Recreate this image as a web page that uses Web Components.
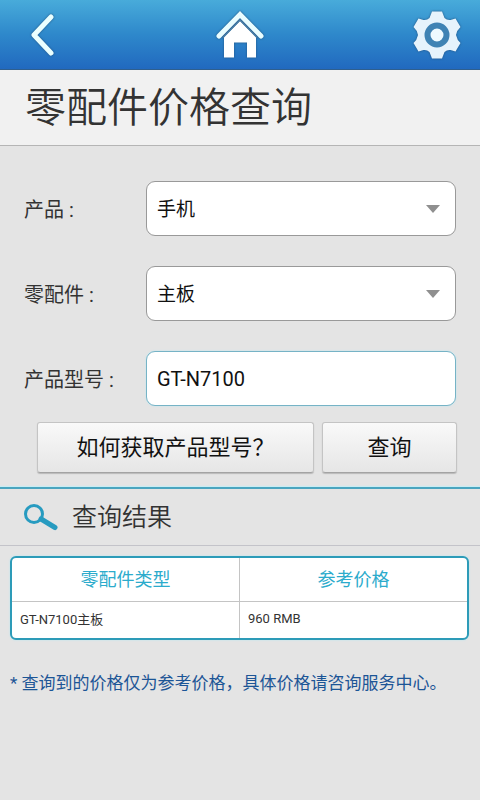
<!DOCTYPE html>
<html lang="zh-CN">
<head>
<meta charset="utf-8">
<meta name="viewport" content="width=device-width, initial-scale=1">
<title>零配件价格查询</title>
<style>
  html { min-height: 100%; background: #e4e4e4; }
  body { margin: 0; font-family: Roboto, "Noto Sans CJK SC", sans-serif; color: #333; }
</style>
</head>
<body>
<price-page></price-page>
<script>
function define(name, html) {
  const template = document.createElement('template');
  template.innerHTML = html;
  customElements.define(name, class extends HTMLElement {
    constructor() {
      super();
      this.attachShadow({ mode: 'open' }).append(template.content.cloneNode(true));
    }
  });
}

define('app-bar', `
  <style>
    :host { display: grid; grid-template-columns: 1fr auto 1fr; align-items: center; height: 70px; box-sizing: border-box;
      padding: 0 16px; background: linear-gradient(#48abda, #2e88cb 50%, #2169bf); border-bottom: 1px solid #2f5f8e; }
    button { display: block; padding: 0; border: 0; background: none; cursor: pointer; }
    button:last-child { justify-self: end; }
    svg { display: block; filter: drop-shadow(0 0 1px #22527f); }
  </style>
  <button aria-label="返回"><svg width="54" height="54" viewBox="0 0 54 54" fill="none" stroke="#eaffff" stroke-width="5" stroke-linecap="round" stroke-linejoin="round"><path d="M35 9 18 27 35 45"/></svg></button>
  <button aria-label="主页"><svg width="50" height="54" viewBox="0 0 50 54"><path d="M4 28 25 6.500 46 28" fill="none" stroke="#e9fdff" stroke-width="5" stroke-linecap="round" stroke-linejoin="miter"/><path d="M9 29 25 13 41 29V49.500H32V34.500H19V49.500H9Z" fill="#fff"/><path d="M8 29.500 25 12 42 29.500" fill="none" stroke="#4a7fa8" stroke-width="1.500"/></svg></button>
  <button aria-label="设置"><svg width="54" height="54" viewBox="-27 -27 54 54"><path d="M-5-23.500H5L7.500-17Q10-14.500 13.500-15L18.500-16.500L23.500-8Q20-5 19 0Q20 5 23.500 8L18.500 16.500L13.500 15Q10 14.500 7.500 17L5 23.500H-5L-7.500 17Q-10 14.500-13.500 15L-18.500 16.500L-23.500 8Q-20 5-19 0Q-20-5-23.500-8L-18.500-16.500L-13.500-15Q-10-14.500-7.500-17Z" fill="#e6f3fc"/><circle r="9.500" fill="#eefaff" stroke="#3f83b4" stroke-width="6"/></svg></button>
`);

define('page-title', `
  <style>
    :host { display: block; background: #f1f1f1; border-bottom: 1px solid #b5b5b5; padding: 4px 25px 11px; }
    h1 { margin: 0; font-size: 41px; line-height: 60px; font-weight: 350; color: #333; font-family: "Noto Sans CJK SC", sans-serif; }
  </style>
  <h1><slot></slot></h1>
`);

const fieldStyle = `
  :host { display: grid; grid-template-columns: 122px 1fr; align-items: center; }
  label { padding-top: 2px; font-size: 20px; line-height: 28px; color: #333; }
  .box { display: grid; align-items: center; }
  .box > * { grid-area: 1 / 1; }
  select, input { appearance: none; box-sizing: border-box; width: 100%; min-width: 0; height: 55px; margin: 0;
    padding: 0 10px; border: 1px solid #999; border-radius: 9px; background: #fff; font: inherit; font-size: 19px; color: #111; outline: 0; }
  select { padding-top: 2px; }
  input { font-size: 20px; border-color: #76b3c6; box-shadow: 0 0 2px #b8e6f2; }
  svg { justify-self: end; margin-right: 15px; pointer-events: none; }
`;

function defineField(name, control) {
  customElements.define(name, class extends HTMLElement {
    constructor() {
      super();
      this.attachShadow({ mode: 'open' }).innerHTML =
        `<style>${fieldStyle}</style><label for="control"></label><div class="box">${control}</div>`;
    }
    connectedCallback() {
      this.shadowRoot.querySelector('label').textContent = this.getAttribute('label');
      const value = this.getAttribute('value');
      const el = this.shadowRoot.getElementById('control');
      if (el.tagName === 'SELECT') el.add(new Option(value, value));
      else el.value = value;
    }
  });
}
defineField('select-field', '<select id="control"></select><svg width="16" height="10" viewBox="0 0 16 10"><path d="M1 1H15L8 9Z" fill="#8f8f8f"/></svg>');
defineField('text-field', '<input id="control" type="text">');

define('push-button', `
  <style>
    :host { display: block; }
    button { display: block; width: 100%; height: 51px; padding: 0 0 6px; border: 1px solid #c4c4c4; border-bottom-color: #a3a3a3;
      border-radius: 3px; background: linear-gradient(#f9f9f9, #e6e6e6); box-shadow: 0 1px 1px #b9b9b9;
      font: inherit; font-size: 22px; color: #111; cursor: pointer; white-space: nowrap; }
  </style>
  <button type="button"><slot></slot></button>
`);

define('result-heading', `
  <style>
    :host { display: flex; align-items: center; gap: 14px; height: 56px; padding: 0 22px; border-top: 2px solid #4aa5bf; border-bottom: 1px solid #c3c3c9; box-shadow: 0 -1px 1px #c9ecf3; }
    h2 { margin: 0; padding-bottom: 4px; font-size: 25px; line-height: 38px; font-weight: 350; color: #333; font-family: "Noto Sans CJK SC", sans-serif; }
  </style>
  <svg width="36" height="30" viewBox="0 0 36 30" fill="none" stroke="#279bc0"><circle cx="12" cy="12" r="8.500" stroke-width="3"/><path d="M19 17 33 25.500" stroke-width="5" stroke-linecap="round"/></svg>
  <h2><slot></slot></h2>
`);

define('price-table', `
  <style>
    :host { display: block; border: 2px solid #2d9bb8; border-radius: 6px; background: #fff; overflow: hidden; box-shadow: 0 0 2px #b0e6f2; }
    table { width: 100%; border-collapse: collapse; table-layout: fixed; }
    th, td { padding: 0 8px 2px; box-sizing: border-box; }
    th { height: 43px; border-bottom: 1px solid #c4c4c4; font-size: 18px; font-weight: 400; color: #2cabcc; }
    td { height: 37px; font-size: 13px; color: #333; }
    tr > :first-child { border-right: 1px solid #c4c4c4; }
  </style>
  <table>
    <thead><tr><th scope="col">零配件类型</th><th scope="col">参考价格</th></tr></thead>
    <tbody><tr><td>GT-N7100主板</td><td>960 RMB</td></tr></tbody>
  </table>
`);

define('price-page', `
  <style>
    :host { display: block; }
    form { display: grid; gap: 30px; padding: 35px 24px 0; }
    .actions { display: grid; grid-template-columns: 277fr 135fr; gap: 8px; padding: 16px 23px 14px 37px; }
    price-table { margin: 10px 11px 0 10px; }
    p { margin: 30px 10px; font-size: 17px; line-height: 26px; color: #1c5596; }
  </style>
  <app-bar></app-bar>
  <main>
    <page-title>零配件价格查询</page-title>
    <form>
      <select-field label="产品 :" value="手机"></select-field>
      <select-field label="零配件 :" value="主板"></select-field>
      <text-field label="产品型号 :" value="GT-N7100"></text-field>
    </form>
    <div class="actions">
      <push-button>如何获取产品型号？</push-button>
      <push-button>查询</push-button>
    </div>
    <result-heading>查询结果</result-heading>
    <price-table></price-table>
    <p>* 查询到的价格仅为参考价格，具体价格请咨询服务中心。</p>
  </main>
`);
</script>
</body>
</html>
